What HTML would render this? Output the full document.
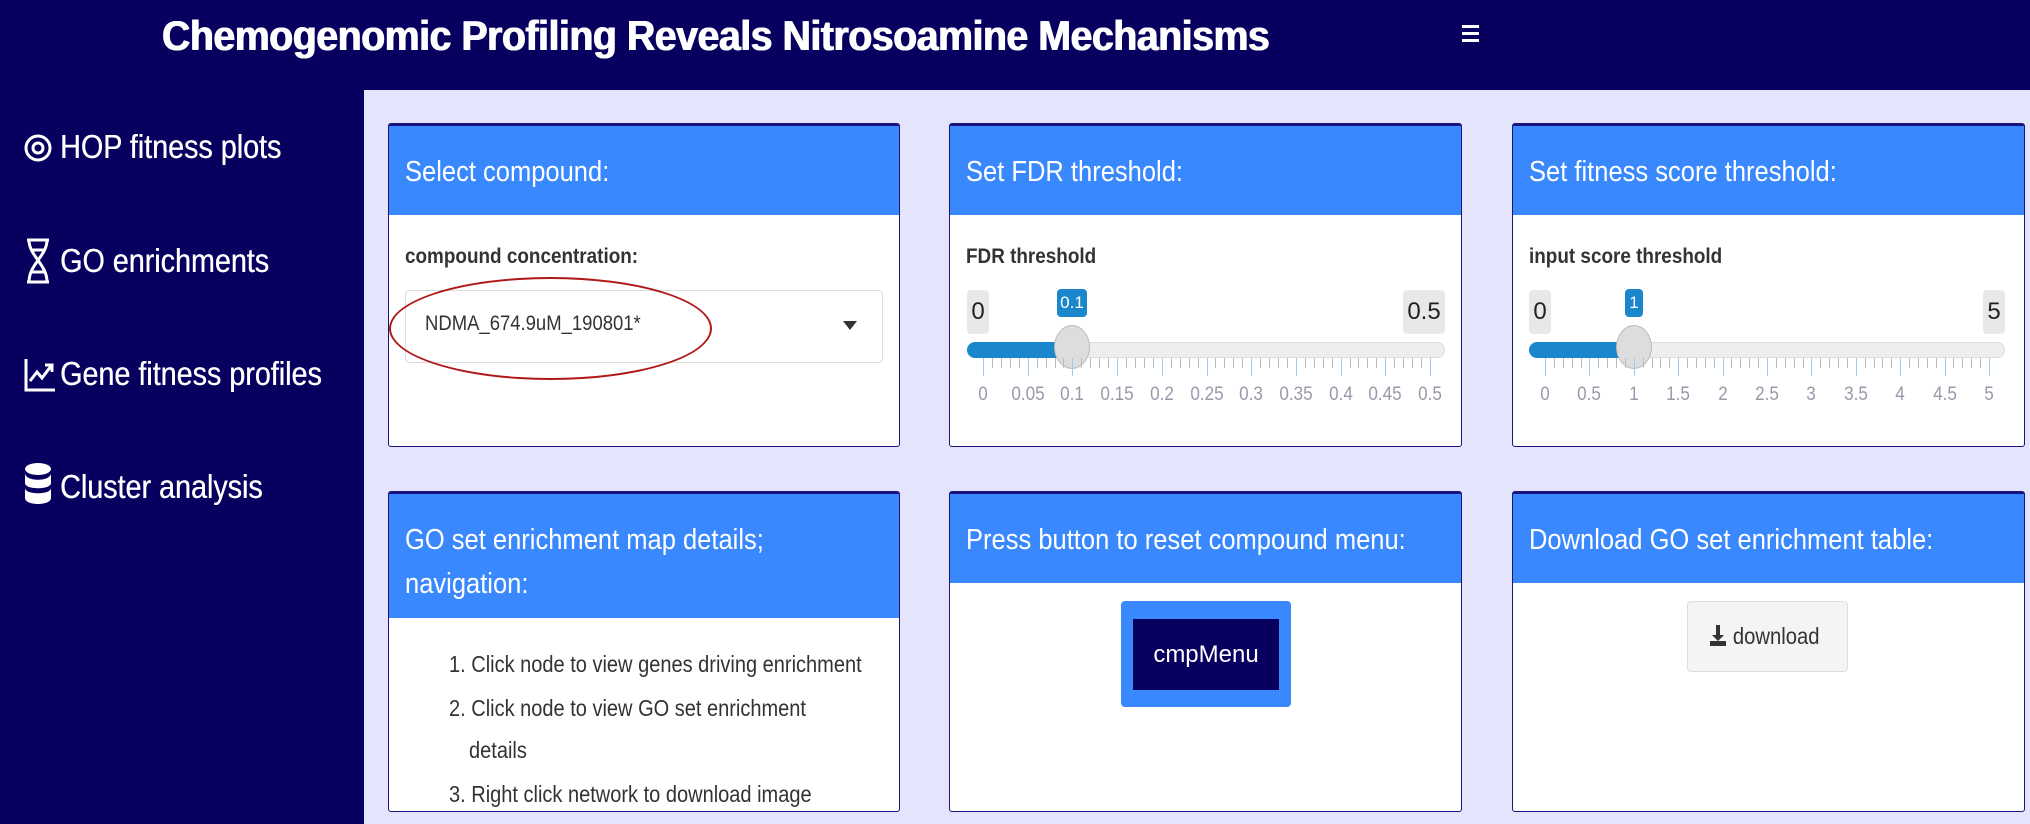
<!DOCTYPE html>
<html><head><meta charset="utf-8"><style>
*{margin:0;padding:0;box-sizing:border-box}
body{width:2030px;height:824px;overflow:hidden;background:#07005f;font-family:"Liberation Sans",sans-serif;position:relative}
.a{position:absolute}
#main{left:364px;top:90px;width:1666px;height:734px;background:#e4e4fc}
.title{left:162px;top:12px;color:#fff;font-weight:bold;font-size:42px;white-space:nowrap;transform:scaleX(0.935);transform-origin:left;letter-spacing:-0.5px;text-shadow:0.6px 0 0 #fff,-0.6px 0 0 #fff}
.nav{color:#fff;font-size:33px;left:60px;white-space:nowrap;transform:scaleX(0.87);transform-origin:left;text-shadow:0.4px 0 0 #fff}
.box{background:#fff;border:1.5px solid #1c1280;border-top:3px solid #1c1280;border-radius:3px;overflow:hidden}
.hd{background:#3a88fe;color:#fff;font-size:29px;padding:24px 16px 0 16px;line-height:44px;white-space:nowrap}
.hd span{display:inline-block;transform:scaleX(0.88);transform-origin:left}
.lbl{font-weight:bold;font-size:21px;color:#333;transform:scaleX(0.9);transform-origin:left;white-space:nowrap}
.track{height:16px;border-radius:8px;background:#eee;border:1px solid #ddd}
.fill{height:16px;border-radius:8px 0 0 8px;background:#1a87cd}
.handle{width:36px;height:44px;border-radius:50%;background:#ddd;border:1.5px solid #bbb}
.mm{background:#e8e8e8;border-radius:4px;font-size:24px;color:#222;text-align:center;line-height:44px}
.badge{background:#1a87cd;color:#fff;border-radius:4px;font-size:17px;text-align:center;line-height:28px}
.tl{font-size:19px;color:#99a;transform:translateX(-50%) scaleX(0.9)}
.tk{width:1px;background:#bbb}
.li{font-size:23px;color:#333;white-space:nowrap;transform:scaleX(0.87);transform-origin:left}
</style></head><body>
<div class="a title">Chemogenomic Profiling Reveals Nitrosoamine Mechanisms</div>
<div class="a" style="left:1462px;top:25px;width:17px">
<div style="height:3px;background:#fff;margin-bottom:4px"></div><div style="height:3px;background:#fff;margin-bottom:4px"></div><div style="height:3px;background:#fff"></div></div>

<svg class="a" style="left:24px;top:128px" width="30" height="40" viewBox="0 0 30 40"><circle cx="14" cy="20" r="12" fill="none" stroke="#fff" stroke-width="3"/><circle cx="14" cy="20" r="5" fill="none" stroke="#fff" stroke-width="3"/></svg>
<div class="a nav" style="top:128px">HOP fitness plots</div>
<svg class="a" style="left:24px;top:238px" width="30" height="46" viewBox="0 0 30 46"><path d="M3 2H25M3 44H25M5 2C5 18 23 26 23 44M23 2C23 18 5 26 5 44M8 12H20M8 34H20" fill="none" stroke="#fff" stroke-width="3"/></svg>
<div class="a nav" style="top:242px">GO enrichments</div>
<svg class="a" style="left:24px;top:357px" width="32" height="36" viewBox="0 0 32 36"><path d="M2 2V33H31M6 24L13 15L18 21L27 9M21 8H28V15" fill="none" stroke="#fff" stroke-width="3"/></svg>
<div class="a nav" style="top:355px">Gene fitness profiles</div>
<svg class="a" style="left:24px;top:462px" width="30" height="44" viewBox="0 0 30 44"><ellipse cx="14" cy="7" rx="13" ry="6" fill="#fff"/><path d="M1 11C1 20 27 20 27 11V21C27 28 1 28 1 21ZM1 26C1 33 27 33 27 26V36C27 44 1 44 1 36Z" fill="#fff"/></svg>
<div class="a nav" style="top:468px">Cluster analysis</div>

<div class="a" id="main"></div>

<!-- Row 1 -->
<div class="a box" style="left:388px;top:123px;width:512px;height:324px">
<div class="hd" style="height:89px"><span>Select compound:</span></div>
<div class="a lbl" style="left:16px;top:119px">compound concentration:</div>
<div class="a" style="left:16px;top:164px;width:478px;height:73px;border:1.5px solid #ddd;border-radius:4px"></div>
<div class="a" style="left:36px;top:186px;font-size:21px;color:#333;transform:scaleX(0.88);transform-origin:left">NDMA_674.9uM_190801*</div>
<div class="a" style="left:454px;top:195px;border-left:7px solid transparent;border-right:7px solid transparent;border-top:9px solid #333"></div>
</div>
<div class="a" style="left:389px;top:277px;width:323px;height:103px;border:2px solid #b01818;border-radius:50%"></div>

<div class="a box" style="left:949px;top:123px;width:513px;height:324px">
<div class="hd" style="height:89px"><span>Set FDR threshold:</span></div>
<div class="a lbl" style="left:16px;top:119px">FDR threshold</div>
</div>
<div class="a box" style="left:1512px;top:123px;width:513px;height:324px">
<div class="hd" style="height:89px"><span>Set fitness score threshold:</span></div>
<div class="a lbl" style="left:16px;top:119px">input score threshold</div>
</div>

<!-- sliders -->
<div class="a mm" style="left:967px;top:290px;width:22px">0</div>
<div class="a mm" style="left:1403px;top:290px;width:42px">0.5</div>
<div class="a badge" style="left:1057px;top:289px;width:30px">0.1</div>
<div class="a track" style="left:967px;top:342px;width:478px"></div>
<div class="a fill" style="left:967px;top:342px;width:105px"></div>
<div class="a handle" style="left:1054px;top:325px"></div>

<div class="a mm" style="left:1529px;top:290px;width:22px">0</div>
<div class="a mm" style="left:1983px;top:290px;width:22px">5</div>
<div class="a badge" style="left:1625px;top:289px;width:18px">1</div>
<div class="a track" style="left:1529px;top:342px;width:476px"></div>
<div class="a fill" style="left:1529px;top:342px;width:105px"></div>
<div class="a handle" style="left:1616px;top:325px"></div>

<div id="ticks"></div>

<!-- Row 2 -->
<div class="a box" style="left:388px;top:491px;width:512px;height:321px">
<div class="hd" style="height:124px;line-height:44px;white-space:normal"><span>GO set enrichment map details;<br>navigation:</span></div>
<div class="a li" style="left:60px;top:157px">1. Click node to view genes driving enrichment</div>
<div class="a li" style="left:60px;top:201px">2. Click node to view GO set enrichment</div>
<div class="a li" style="left:80px;top:243px">details</div>
<div class="a li" style="left:60px;top:287px">3. Right click network to download image</div>
</div>
<div class="a box" style="left:949px;top:491px;width:513px;height:321px">
<div class="hd" style="height:89px"><span>Press button to reset compound menu:</span></div>
</div>
<div class="a box" style="left:1512px;top:491px;width:513px;height:321px">
<div class="hd" style="height:89px"><span>Download GO set enrichment table:</span></div>
</div>
<div class="a" style="left:1121px;top:601px;width:170px;height:106px;background:#3a88fe;border-radius:4px"></div>
<div class="a" style="left:1133px;top:619px;width:146px;height:71px;background:#07005f;color:#fff;font-size:24px;text-align:center;line-height:71px">cmpMenu</div>
<div class="a" style="left:1687px;top:601px;width:161px;height:71px;background:#f4f4f4;border:1.5px solid #ddd;border-radius:4px;font-size:23px;color:#333;line-height:68px;text-align:center">
<svg width="18" height="24" viewBox="0 0 18 24" style="vertical-align:-3px"><path d="M7 2H11V12H15L9 18L3 12H7Z" fill="#333"/><rect x="1" y="18" width="16" height="5" fill="#333"/></svg><span style="display:inline-block;transform:scaleX(0.88)">download</span></div>

<script>
var h='';
function sl(x0,w,labels){
 var n=labels.length, st=w/(n-1);
 for(var i=0;i<n;i++){var x=x0+i*st;
  h+='<div class="a tk" style="left:'+x+'px;top:358px;height:18px;background:#a8c8e8"></div>';
  h+='<div class="a tl" style="left:'+x+'px;top:384px">'+labels[i]+'</div>';
  if(i<n-1){for(var j=1;j<5;j++){h+='<div class="a tk" style="left:'+(x+j*st/5)+'px;top:358px;height:10px"></div>';}}
 }
}
sl(983,447,['0','0.05','0.1','0.15','0.2','0.25','0.3','0.35','0.4','0.45','0.5']);
sl(1545,444,['0','0.5','1','1.5','2','2.5','3','3.5','4','4.5','5']);
document.getElementById('ticks').innerHTML=h;
</script>
</body></html>
